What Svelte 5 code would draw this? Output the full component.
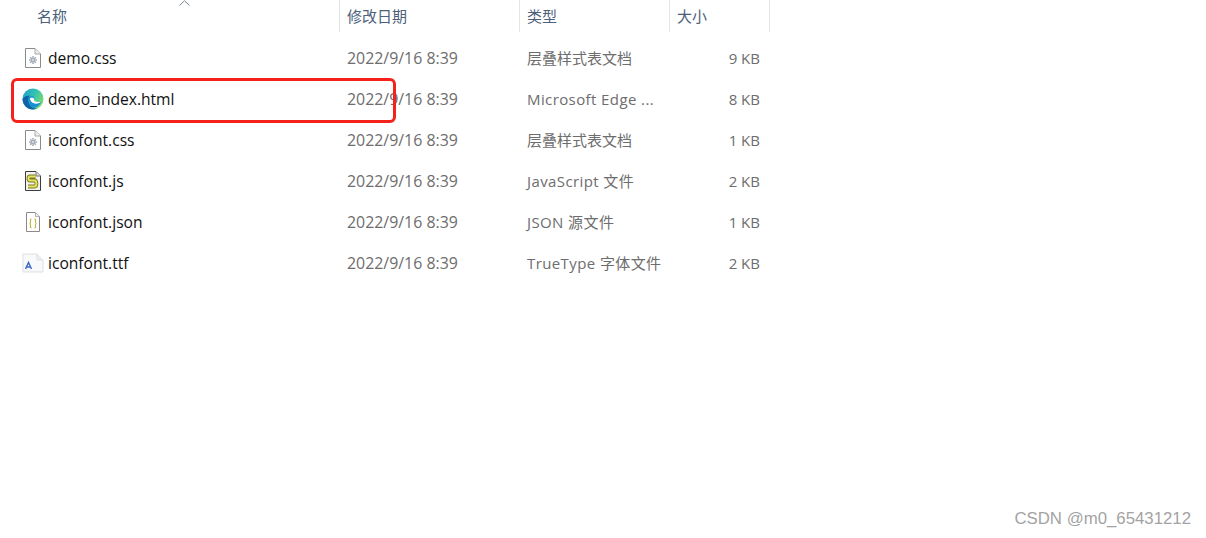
<script lang="ts">
	type FileRow = { name: string; icon: string; date: string; type: string; latin?: boolean; size: string };

	const FILES: FileRow[] = [
		{ name: 'demo.css', icon: 'css', date: '2022/9/16 8:39', type: '层叠样式表文档', size: '9 KB' },
		{ name: 'demo_index.html', icon: 'edge', date: '2022/9/16 8:39', type: 'Microsoft Edge ...', latin: true, size: '8 KB' },
		{ name: 'iconfont.css', icon: 'css', date: '2022/9/16 8:39', type: '层叠样式表文档', size: '1 KB' },
		{ name: 'iconfont.js', icon: 'js', date: '2022/9/16 8:39', type: 'JavaScript 文件', latin: true, size: '2 KB' },
		{ name: 'iconfont.json', icon: 'json', date: '2022/9/16 8:39', type: 'JSON 源文件', latin: true, size: '1 KB' },
		{ name: 'iconfont.ttf', icon: 'ttf', date: '2022/9/16 8:39', type: 'TrueType 字体文件', latin: true, size: '2 KB' },
	];
</script>

<div class="page">
	<div class="list">
		<div class="header">
			<div class="col name"><span>名称</span></div>
			<div class="col date"><span>修改日期</span></div>
			<div class="col type"><span>类型</span></div>
			<div class="col size"><span>大小</span></div>
			<svg class="sort" width="11" height="6" viewBox="0 0 11 6" fill="none" stroke="#7d8793" stroke-width="1">
				<path d="M0.5 5.5L5.5 0.7L10.5 5.5"/>
			</svg>
		</div>

		{#each FILES as f}
			<div class="row">
				<div class="cell file">
					<span class="icon">
						{#if f.icon === 'css'}
							<svg width="20" height="20" viewBox="0 0 20 20">
								<path d="M2.5 .5H12L17.5 6V19.5H2.5Z" fill="#fff" stroke="#8a8a8a"/>
								<path d="M12 .5V6H17.5" fill="#eee" stroke="#a8a8a8"/>
								<circle cx="10" cy="12" r="2.6" fill="#a4adb8"/>
								<circle cx="10" cy="12" r="0.9" fill="#e8eaee"/>
								<path d="M10 8V9.4M10 14.6V16M6 12H7.4M12.6 12H14M7.2 9.2L8.2 10.2M11.8 13.8L12.8 14.8M12.8 9.2L11.8 10.2M8.2 13.8L7.2 14.8" stroke="#a4adb8" stroke-width="1.6"/>
							</svg>
						{:else if f.icon === 'edge'}
							<svg width="22" height="22" viewBox="0 0 22 22">
								<defs>
									<linearGradient id="edge-top" x1="0" y1="0" x2="1" y2="0.6">
										<stop offset="0" stop-color="#1a9bd0"/>
										<stop offset="0.55" stop-color="#33c4b0"/>
										<stop offset="1" stop-color="#7fdc6a"/>
									</linearGradient>
								</defs>
								<circle cx="11" cy="11" r="10.5" fill="url(#edge-top)"/>
								<path d="M.5 11C2 8.5 5 7.5 8 7.5 6.5 9 6 11 6.5 13.5 7.5 18 11 20.5 15 20.6 13.5 21.2 12.3 21.5 11 21.5 5.2 21.5.5 16.8.5 11Z" fill="#0f63a8"/>
								<path d="M7 11C7 8.8 9 7.5 11 8.3 12.5 9 12.6 11 11.3 12.4 12.5 14.5 16.5 14.5 19.5 13 18 17.5 14.5 20 11.5 19.8 8.5 19 7 15 7 11Z" fill="#1b8fd6"/>
								<path d="M8 10.5C9.5 8.8 12 9.5 12 11.5 12 13 13.5 14.2 16 14 18 13.8 19.5 13 19.5 13 18.5 15 15 16 12.5 15.5 9.5 15 8 12.5 8 10.5Z" fill="#fff"/>
							</svg>
						{:else if f.icon === 'js'}
							<svg width="20" height="22" viewBox="0 0 20 22">
								<path d="M2.5 1.5H13L17.5 6V20.5H2.5Z" fill="#f3f3ee" stroke="#3c3c3c"/>
								<path d="M13 1.5V6H17.5" fill="#ddd" stroke="#777"/>
								<path d="M12.5 6.5H7C5 6.5 5 10.5 7 10.5H11.5C14 10.5 14 16.5 11.5 16.5H5" fill="none" stroke="#77772a" stroke-width="3.8"/>
								<path d="M12.5 6.5H7C5 6.5 5 10.5 7 10.5H11.5C14 10.5 14 16.5 11.5 16.5H5" fill="none" stroke="#e6e45a" stroke-width="2"/>
							</svg>
						{:else if f.icon === 'json'}
							<svg width="20" height="20" viewBox="0 0 20 20">
								<path d="M3.5 .5H12.5L16.5 4.5V19.5H3.5Z" fill="#fff" stroke="#8a8a8a"/>
								<path d="M12.5 .5V4.5H16.5" fill="#f0f0f0" stroke="#b0b0b0"/>
								<path d="M8.5 7C7 7 7.5 8.5 7.5 10 7.5 11 7 11.5 6.5 11.5 7 11.5 7.5 12 7.5 13 7.5 14.5 7 16 8.5 16" fill="none" stroke="#b9b63c" stroke-width="1.1"/>
								<path d="M11.5 7C13 7 12.5 8.5 12.5 10 12.5 11 13 11.5 13.5 11.5 13 11.5 12.5 12 12.5 13 12.5 14.5 13 16 11.5 16" fill="none" stroke="#b9b63c" stroke-width="1.1"/>
							</svg>
						{:else}
							<svg width="22" height="20" viewBox="0 0 22 20">
								<path d="M1 1H15L21 7V19H1Z" fill="#f8f9fb" stroke="#dcdfe4"/>
								<path d="M15 1V7H21" fill="#eceef1" stroke="#dcdfe4"/>
								<path d="M3.5 16L6.5 9.5L9.5 16M4.6 14H8.4" fill="none" stroke="#3b67c9" stroke-width="1.4"/>
							</svg>
						{/if}
					</span>
					<span class="filename">{f.name}</span>
				</div>
				<div class="cell date">{f.date}</div>
				<div class="cell type" class:latin={f.latin}>{f.type}</div>
				<div class="cell size">{f.size}</div>
			</div>
		{/each}

		<div class="highlight"></div>
	</div>

	<div class="watermark">CSDN @m0_65431212</div>
</div>

<style>
	:global(body) {
		background: #fff;
	}

	.page {
		position: relative;
		width: 1206px;
		height: 538px;
		overflow: hidden;
		background: #fff;
		font-family: 'Open Sans', 'Noto Sans CJK SC', sans-serif;
		font-size: 15px;
	}

	.list {
		position: relative;
		width: 770px;
	}

	.header,
	.row {
		display: grid;
		grid-template-columns: 340px 180px 150px 100px;
	}

	.header {
		position: relative;
		height: 32px;
		margin-bottom: 5px;
		color: #4c607a;
	}

	.col {
		display: flex;
		align-items: center;
		height: 32px;
		padding: 0 0 2px 7px;
		border-right: 1px solid #e5e5e5;
		box-sizing: border-box;
		font-size: 15px;
	}

	.col.name {
		padding-left: 37px;
	}

	.sort {
		position: absolute;
		left: 179px;
		top: 0;
	}

	.row {
		height: 41px;
		align-items: center;
		color: #6d6d6d;
	}

	.cell {
		padding-left: 7px;
		white-space: nowrap;
	}

	.cell.file {
		display: flex;
		align-items: center;
		padding-left: 22px;
		color: #111;
		font-size: 15.6px;
	}

	.cell.date {
		font-size: 15.9px;
	}

	.cell.type.latin {
		letter-spacing: 0.4px;
	}

	.icon {
		display: flex;
		justify-content: center;
		width: 22px;
		margin-right: 4px;
	}

	.cell.size {
		padding: 0 10px 0 0;
		text-align: right;
	}

	.highlight {
		position: absolute;
		left: 11px;
		top: 78px;
		width: 385px;
		height: 45px;
		box-sizing: border-box;
		border: 3px solid #f5221b;
		border-radius: 6px;
	}

	.watermark {
		position: absolute;
		right: 15px;
		bottom: 9px;
		color: #a3a3a3;
		font-family: 'Liberation Sans', sans-serif;
		font-size: 16.8px;
	}
</style>
